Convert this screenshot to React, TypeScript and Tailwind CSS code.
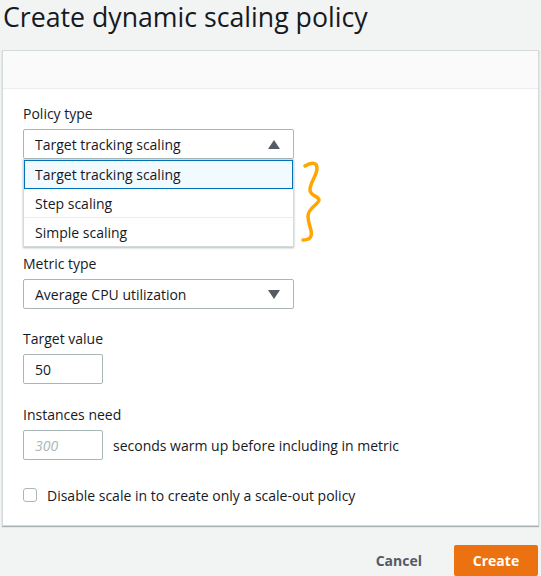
import React from "react";

function Caret({ up }: { up?: boolean }) {
  return (
    <svg width="12" height="9" viewBox="0 0 12 9" className="fill-[#545b64]">
      {up ? <polygon points="0,9 12,9 6,0" /> : <polygon points="0,0 12,0 6,9" />}
    </svg>
  );
}

export default function App() {
  return (
    <div
      className="w-[541px] h-[576px] bg-[#f2f3f3] text-[#16191f] overflow-hidden"
      style={{ fontFamily: '"Open Sans", "Noto Sans", sans-serif' }}
    >
      <h1 className="pl-[3px] h-[50px] text-[26.7px] leading-[34px] text-[#16191f]">
        Create dynamic scaling policy
      </h1>

      {/* Card */}
      <div className="ml-[2px] w-[537px] bg-white border border-[#d5dbdb] shadow-[0_1px_1px_rgba(0,28,36,0.3)]">
        <div className="h-[38px] bg-[#fafafa] border-b border-[#eaeded]" />

        <div className="pl-[20px] pt-[15px] pb-[20px] text-[14px]">
          <div className="leading-[20px]">Policy type</div>
          <div className="relative mt-[5px] w-[271px]">
            <div className="h-[30px] flex items-center justify-between pl-[11px] pr-[13px] border border-[#aab7b8] rounded-[2px] bg-white">
              <span>Target tracking scaling</span>
              <Caret up />
            </div>
            <div className="bg-white border border-[#d5dbdb] shadow-[0_1px_2px_rgba(0,28,36,0.3)]">
              <div className="h-[29px] flex items-center pl-[10px] bg-[#f1faff] border border-[#0073bb]">
                Target tracking scaling
              </div>
              <div className="h-[29px] flex items-center pl-[11px] border-b border-[#eaeded]">Step scaling</div>
              <div className="h-[28px] flex items-center pl-[11px]">Simple scaling</div>
            </div>
            <svg
              width="26"
              height="84"
              viewBox="0 0 26 84"
              className="absolute left-[276px] top-[31px]"
            >
              <path
                d="M6 6 C12 2 18 2 18 8 C18 16 11 22 11 30 C11 36 20 36 20 40 C20 44 9 48 9 56 C9 66 14 70 12 76 C11 79 7 80 4 80"
                stroke="#ffa600"
                strokeWidth="3.5"
                fill="none"
                strokeLinecap="round"
              />
            </svg>
          </div>

          <div className="mt-[7px] leading-[20px]">Metric type</div>
          <div className="mt-[5px] w-[271px] h-[30px] flex items-center justify-between pl-[11px] pr-[13px] border border-[#aab7b8] rounded-[2px] bg-white">
            <span>Average CPU utilization</span>
            <Caret />
          </div>

          <div className="mt-[20px] leading-[20px]">Target value</div>
          <div className="mt-[5px] w-[80px] h-[30px] flex items-center pl-[11px] border border-[#aab7b8] rounded-[2px]">
            50
          </div>

          <div className="mt-[21px] leading-[20px]">Instances need</div>
          <div className="mt-[5px] flex items-center">
            <div className="w-[80px] h-[30px] flex items-center pl-[11px] border border-[#aab7b8] rounded-[2px] italic text-[#aab7b8]">
              300
            </div>
            <span className="ml-[10px]">seconds warm up before including in metric</span>
          </div>

          <div className="mt-[25px] flex items-center h-[20px]">
            <div className="w-[14px] h-[14px] border border-[#aab7b8] rounded-[3px] bg-white" />
            <span className="ml-[10px]">Disable scale in to create only a scale-out policy</span>
          </div>
        </div>
      </div>

      <div className="mt-[19px] flex items-center justify-end pr-[3px]">
        <button className="text-[14px] font-bold text-[#545b64] mr-[32px]">Cancel</button>
        <button className="h-[31px] w-[84px] bg-[#ec7211] text-white text-[14px] font-bold rounded-[2px]">
          Create
        </button>
      </div>
    </div>
  );
}
